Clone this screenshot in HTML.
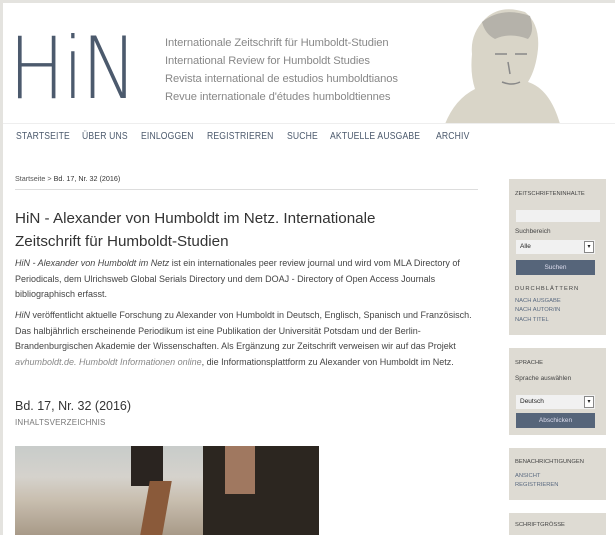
<!DOCTYPE html>
<html><head><meta charset="utf-8"><style>
*{margin:0;padding:0;box-sizing:border-box}
body{width:615px;height:549px;background:#fff;font-family:"Liberation Sans",sans-serif;position:relative;overflow:hidden;color:#333}
.frame{position:absolute;left:0;top:0;width:615px;height:535px;border-top:3px solid #e4e3df;border-left:3px solid #e4e3df}
.a{position:absolute;white-space:nowrap}
.logo{left:9px;top:26px;font-size:86px;color:#4c5a6d;line-height:1;font-family:"DejaVu Sans","Liberation Sans",sans-serif;font-weight:200;transform:scaleX(0.86);transform-origin:left top;letter-spacing:-2px}
.sub{left:165px;font-size:11.2px;color:#888;letter-spacing:-0.1px}
.nv{position:absolute;top:130px;font-size:10.5px;color:#4c5a6d;transform:scaleX(0.82);transform-origin:left top;white-space:nowrap;letter-spacing:0.2px}
.hr{position:absolute;left:15px;width:463px;height:1px;background:#ddd}
.box{position:absolute;left:509px;width:97px;background:#dedbd3}
.bt{position:absolute;left:6px;font-size:5.8px;color:#444;white-space:nowrap}
.lk{color:#5a6a80}
.btn{position:absolute;left:7px;width:79px;height:15px;background:#56657a;color:#dde;font-size:6.5px;text-align:center;line-height:15px}
.sel{position:absolute;left:7px;width:79px;height:14px;background:#f1f1f1;font-size:6.5px;line-height:14px;padding-left:4px;color:#222}
.sel i{position:absolute;right:1px;top:1px;width:10px;height:12px;border:1px solid #888;background:#fff;font-style:normal;font-size:6px;text-align:center;line-height:10px}
.l{position:absolute;left:15px;font-size:9px;color:#444;white-space:nowrap}
</style></head><body>
<div class="frame"></div>
<div class="a logo">HiN</div>
<div class="a sub" style="top:37px">Internationale Zeitschrift für Humboldt-Studien</div>
<div class="a sub" style="top:55px">International Review for Humboldt Studies</div>
<div class="a sub" style="top:73px">Revista international de estudios humboldtianos</div>
<div class="a sub" style="top:91px">Revue internationale d'études humboldtiennes</div>
<svg class="a" style="left:440px;top:4px" width="175" height="120" viewBox="0 0 175 120">
<path d="M45 15 Q60 0 85 8 Q100 20 98 45 Q96 65 88 78 Q110 85 120 120 L5 120 Q15 95 35 85 Q30 70 32 50 Q30 30 45 15Z" fill="#d9d5c8"/>
<path d="M42 18 Q62 2 90 12 Q95 28 88 35 Q70 28 55 35 Q45 30 42 18Z" fill="#b5b2aa"/>
<path d="M55 50 l12 0 M75 50 l12 0 M68 58 l2 12 M62 78 q10 4 18 0" stroke="#888" stroke-width="1.5" fill="none"/>
</svg>
<div class="hr" style="top:123px;left:3px;width:612px;background:#eee"></div>
<div class="nv" style="left:16px">STARTSEITE</div>
<div class="nv" style="left:82px">ÜBER UNS</div>
<div class="nv" style="left:141px">EINLOGGEN</div>
<div class="nv" style="left:207px">REGISTRIEREN</div>
<div class="nv" style="left:287px">SUCHE</div>
<div class="nv" style="left:330px">AKTUELLE AUSGABE</div>
<div class="nv" style="left:436px">ARCHIV</div>
<div class="a" style="left:15px;top:174px;font-size:7.2px;color:#555">Startseite &gt; <b style="font-weight:normal;color:#333">Bd. 17, Nr. 32 (2016)</b></div>
<div class="hr" style="top:189px"></div>
<div class="a" style="left:15px;top:207px;font-size:15.2px;line-height:23px;color:#333">HiN - Alexander von Humboldt im Netz. Internationale<br>Zeitschrift für Humboldt-Studien</div>
<div class="l" style="top:258px"><i>HiN - Alexander von Humboldt im Netz</i> ist ein internationales peer review journal und wird vom MLA Directory of</div>
<div class="l" style="top:274px">Periodicals, dem Ulrichsweb Global Serials Directory und dem DOAJ - Directory of Open Access Journals</div>
<div class="l" style="top:289px">bibliographisch erfasst.</div>
<div class="l" style="top:310px"><i>HiN</i> veröffentlicht aktuelle Forschung zu Alexander von Humboldt in Deutsch, Englisch, Spanisch und Französisch.</div>
<div class="l" style="top:326px">Das halbjährlich erscheinende Periodikum ist eine Publikation der Universität Potsdam und der Berlin-</div>
<div class="l" style="top:341px">Brandenburgischen Akademie der Wissenschaften. Als Ergänzung zur Zeitschrift verweisen wir auf das Projekt</div>
<div class="l" style="top:357px"><i style="color:#888">avhumboldt.de. Humboldt Informationen online</i>, die Informationsplattform zu Alexander von Humboldt im Netz.</div>
<div class="a" style="left:15px;top:399px;font-size:12.5px;color:#333">Bd. 17, Nr. 32 (2016)</div>
<div class="a" style="left:15px;top:418px;font-size:8px;color:#777;letter-spacing:0.2px">INHALTSVERZEICHNIS</div>
<div class="a" style="left:15px;top:446px;width:304px;height:89px;background:linear-gradient(180deg,#c8ccca 0%,#d5d2cc 35%,#c9bfb0 60%,#a89a88 100%);overflow:hidden">
<div style="position:absolute;left:116px;top:0;width:32px;height:40px;background:#2a2420"></div>
<div style="position:absolute;left:130px;top:35px;width:22px;height:54px;background:#8a5a3a;transform:skewX(-10deg)"></div>
<div style="position:absolute;left:188px;top:0;width:116px;height:89px;background:#2c2620"></div>
<div style="position:absolute;left:210px;top:0;width:30px;height:48px;background:#a07860"></div>
</div>
<div class="box" style="top:179px;height:156px">
<div class="bt" style="top:12px">ZEITSCHRIFTENINHALTE</div>
<div style="position:absolute;left:7px;top:31px;width:84px;height:12px;background:#f1f1f1"></div>
<div class="bt" style="top:49px;font-size:6.4px">Suchbereich</div>
<div class="sel" style="top:61px">Alle<i>▾</i></div>
<div class="btn" style="top:81px">Suchen</div>
<div class="bt" style="top:107px;letter-spacing:1px">DURCHBLÄTTERN</div>
<div class="bt lk" style="top:119px">NACH AUSGABE</div>
<div class="bt lk" style="top:128px">NACH AUTOR/IN</div>
<div class="bt lk" style="top:138px">NACH TITEL</div>
</div>
<div class="box" style="top:348px;height:87px">
<div class="bt" style="top:12px">SPRACHE</div>
<div class="bt" style="top:27px;font-size:6.4px">Sprache auswählen</div>
<div class="sel" style="top:47px">Deutsch<i>▾</i></div>
<div class="btn" style="top:65px">Abschicken</div>
</div>
<div class="box" style="top:448px;height:52px">
<div class="bt" style="top:11px">BENACHRICHTIGUNGEN</div>
<div class="bt lk" style="top:25px">ANSICHT</div>
<div class="bt lk" style="top:34px">REGISTRIEREN</div>
</div>
<div class="box" style="top:513px;height:22px">
<div class="bt" style="top:9px">SCHRIFTGRÖSSE</div>
</div>
</body></html>
